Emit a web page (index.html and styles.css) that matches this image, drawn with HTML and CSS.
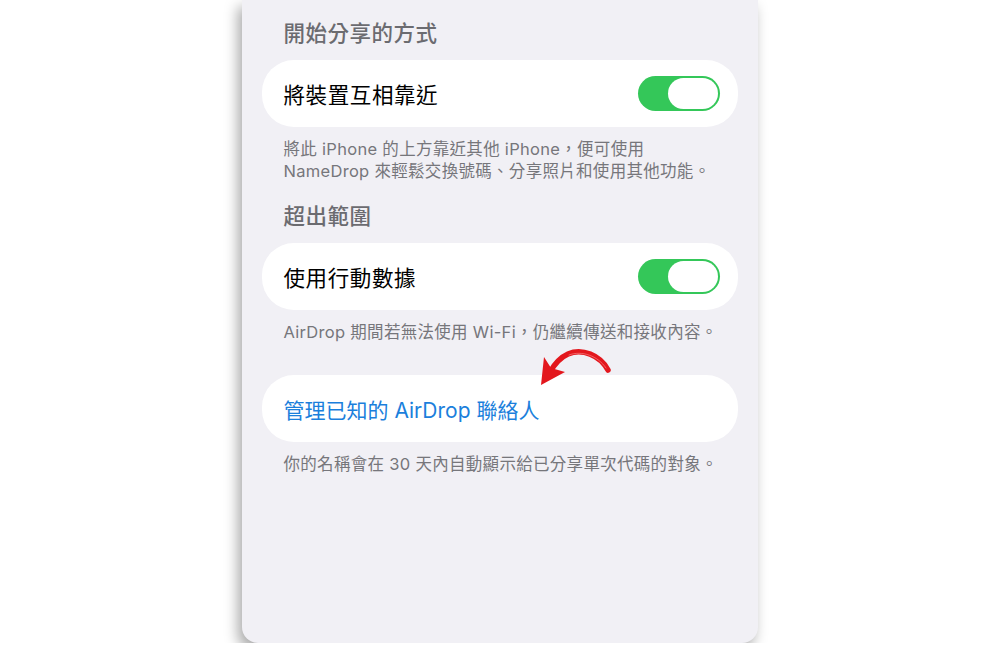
FILE: index.html
```html
<!DOCTYPE html>
<html lang="zh-Hant">
<head>
<meta charset="utf-8">
<title>AirDrop</title>
<link rel="stylesheet" href="styles.css">
</head>
<body>
<main class="panel">
  <h2 class="group-title">開始分享的方式</h2>
  <div class="cell">
    <span class="cell-label">將裝置互相靠近</span>
    <span class="switch"><span class="knob"></span></span>
  </div>
  <p class="footnote">將此 iPhone 的上方靠近其他 iPhone，便可使用<br>NameDrop 來輕鬆交換號碼、分享照片和使用其他功能。</p>

  <h2 class="group-title">超出範圍</h2>
  <div class="cell">
    <span class="cell-label">使用行動數據</span>
    <span class="switch"><span class="knob"></span></span>
  </div>
  <p class="footnote">AirDrop 期間若無法使用 Wi-Fi，仍繼續傳送和接收內容。</p>

  <div class="cell cell-link">
    <span class="cell-label link">管理已知的 AirDrop 聯絡人</span>
  </div>
  <p class="footnote">你的名稱會在 30 天內自動顯示給已分享單次代碼的對象。</p>

  <svg class="pointer" width="78" height="42" viewBox="0 0 78 42" aria-hidden="true">
    <path d="M70 23 C62 8 44 1 30 7 C21 11 16 18 12 25" fill="none" stroke="#e3171d" stroke-width="5.5" stroke-linecap="round"/>
    <path d="M68 21 C60 9 44 3 31 8" fill="none" stroke="#ff9a9a" stroke-width="1" stroke-linecap="round" opacity="0.55"/>
    <polygon points="3,38 6,10 13,21 27,25" fill="#e3171d"/>
  </svg>
</main>
</body>
</html>
```

FILE: styles.css
```css
html, body {
  margin: 0;
  padding: 0;
  background: #ffffff;
}

body {
  font-family: "Inter", "Noto Sans CJK TC", sans-serif;
  -webkit-font-smoothing: antialiased;
}

.panel {
  position: relative;
  width: 516px;
  height: 643px;
  margin: 0 auto;
  box-sizing: border-box;
  padding: 19px 20px 0;
  background: #f1f0f5;
  border-radius: 0 0 16px 16px;
  box-shadow: -4px 7px 14px rgba(0, 0, 0, 0.34);
}

.group-title {
  margin: 0 0 13px;
  padding-left: 22px;
  font-size: 21.5px;
  line-height: 28px;
  font-weight: 500;
  letter-spacing: 0.5px;
  color: #6b6b70;
}

.footnote + .group-title {
  margin-top: 20px;
}

.cell {
  display: flex;
  align-items: center;
  justify-content: space-between;
  height: 67px;
  box-sizing: border-box;
  padding: 0 18px 0 22px;
  background: #ffffff;
  border-radius: 32px;
}

.cell-link {
  margin-top: 32px;
}

.cell-label {
  font-size: 21.5px;
  color: #000000;
  letter-spacing: 0.6px;
}

.cell-label.link {
  font-size: 21px;
  color: #1b7fdc;
  letter-spacing: 0;
}

.switch {
  display: flex;
  justify-content: flex-end;
  align-items: center;
  width: 82px;
  height: 35px;
  box-sizing: border-box;
  padding: 0 2px;
  background: #34c759;
  border-radius: 18px;
}

.knob {
  width: 50px;
  height: 31px;
  background: #ffffff;
  border-radius: 16px;
}

.footnote {
  margin: 0;
  padding: 11px 0 0 22px;
  font-size: 16.5px;
  line-height: 22px;
  letter-spacing: 0.3px;
  white-space: nowrap;
  color: #76767b;
}

.pointer {
  position: absolute;
  left: 296px;
  top: 347px;
}
```
